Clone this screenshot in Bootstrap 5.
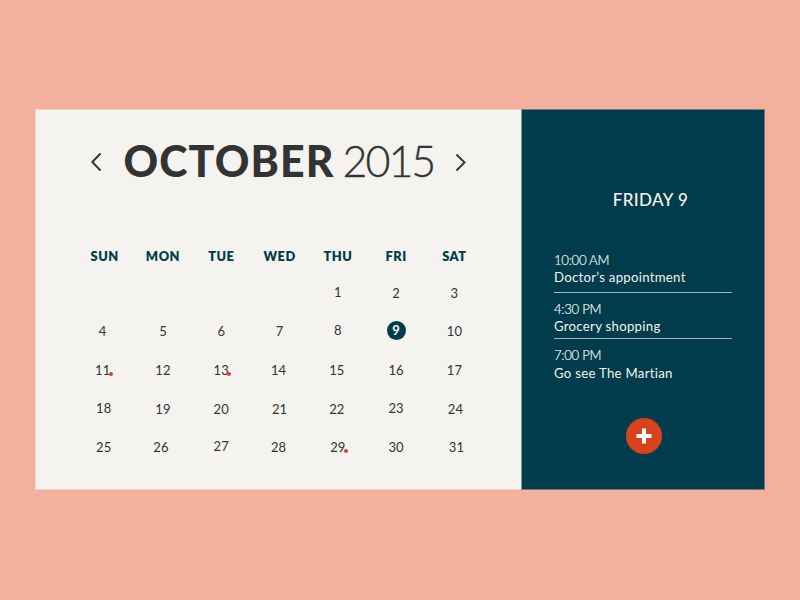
<!DOCTYPE html>
<html lang="en">
<head>
<meta charset="utf-8">
<meta name="viewport" content="width=device-width, initial-scale=1">
<title>October 2015</title>
<link href="https://cdn.jsdelivr.net/npm/bootstrap@5.3.0/dist/css/bootstrap.min.css" rel="stylesheet">
<style>
  body { background: #f4b09e; font-family: Lato, "Open Sans", sans-serif; color: #333; height: 600px; overflow: hidden; }
  .planner { width: 730px; height: 381px; margin: 109px 0 0 35px; }
  .month { width: 486px; background: #f4f3ef; padding-left: 39.5px; border: 1px solid #f4d0c4; border-right: 0; }
  .agenda { background: #003c4b; color: #f4f3ef; padding: 0 32px; border: 1px solid #7a7675; border-left-color: #7a989d; }
  .title-bar { height: 104px; padding-left: 14px; }
  .step { width: 14px; height: 22px; }
  .month-name { font-size: 42.8px; font-weight: 900; line-height: 1; letter-spacing: 1.1px; margin: -2px 0 0 20px; width: 219px; white-space: nowrap; }
  .year-name { font-size: 43px; font-weight: 300; line-height: 1; letter-spacing: -2px; margin-top: -4px; width: 110px; white-space: nowrap; -webkit-text-stroke: .35px #333; }
  .days { display: grid; grid-template-columns: repeat(7, 58.3px); grid-template-rows: 37px; grid-auto-rows: 38.6px; margin-top: 22.5px; }
  .days > * { display: flex; align-items: center; justify-content: center; font-size: 13px; line-height: 16px; letter-spacing: .1px; }
  .days > .weekday { font-size: 12.8px; font-weight: 800; color: #003c4b; letter-spacing: .5px; padding-top: 1px; }
  .up { padding-bottom: 2px; }
  .l1 { padding-right: 2px; } .l2 { padding-right: 4px; } .r1 { padding-left: 2px; } .r2 { padding-left: 4px; }
  .today { width: 19px; height: 19px; background: #003c4b; color: #fff; font-weight: 700; }
  .busy { position: relative; }
  .busy::after { content: ""; position: absolute; right: -2.5px; bottom: 2px; width: 4px; height: 4px; border-radius: 50%; background: #dc431d; }
  .agenda-day { font-size: 17px; line-height: 20px; font-weight: 500; margin: 79.5px 0 0 15px; letter-spacing: .4px; }
  .events { width: 178px; margin-top: 41px; font-size: 13.2px; line-height: 17.3px; }
  .event { height: 46.3px; padding-top: 8px; }
  .event:first-child { height: 41.5px; padding-top: 1px; }
  .event + .event { border-top: 1px solid #a3b5b9; }
  .hour { font-weight: 300; letter-spacing: -.3px; -webkit-text-stroke: .2px #f4f3ef; }
  .what { letter-spacing: .28px; }
  .add { width: 36px; height: 36px; background: #d7431c; margin: 33.5px auto 0 71.5px; }
</style>
</head>
<body>
<main class="planner d-flex">
  <section class="month">
    <header class="title-bar d-flex align-items-center">
      <svg class="step" viewBox="0 0 14 22" fill="none" stroke="#333" stroke-width="1.9"><path d="M10.5 2.5 2.3 11l8.2 8.5"/></svg>
      <span class="month-name">OCTOBER</span>
      <span class="year-name">2015</span>
      <svg class="step" viewBox="0 0 14 22" fill="none" stroke="#333" stroke-width="1.9"><path d="m3.5 3.5 8 8-8 8"/></svg>
    </header>
    <div class="days">
      <div class="weekday">SUN</div><div class="weekday">MON</div><div class="weekday">TUE</div><div class="weekday">WED</div><div class="weekday">THU</div><div class="weekday">FRI</div><div class="weekday">SAT</div>
      <div></div><div></div><div></div><div></div><div class="up">1</div><div>2</div><div>3</div>
      <div class="l2">4</div><div>5</div><div>6</div><div>7</div><div class="up">8</div><div class="up"><span class="today rounded-circle d-flex align-items-center justify-content-center">9</span></div><div>10</div>
      <div class="l2"><span class="busy">11</span></div><div>12</div><div><span class="busy">13</span></div><div class="l1">14</div><div class="l1">15</div><div>16</div><div>17</div>
      <div class="l1 up">18</div><div>19</div><div>20</div><div>21</div><div class="l1">22</div><div class="up">23</div><div class="r1">24</div>
      <div class="l1">25</div><div class="l2">26</div><div class="up">27</div><div class="l1">28</div><div><span class="busy">29</span></div><div>30</div><div class="r2">31</div>
    </div>
  </section>
  <aside class="agenda flex-grow-1">
    <h1 class="agenda-day text-center">FRIDAY 9</h1>
    <div class="events">
      <div class="event"><div class="hour">10:00 AM</div><div class="what">Doctor’s appointment</div></div>
      <div class="event"><div class="hour">4:30 PM</div><div class="what">Grocery shopping</div></div>
      <div class="event"><div class="hour">7:00 PM</div><div class="what">Go see The Martian</div></div>
    </div>
    <div class="add rounded-circle d-flex align-items-center justify-content-center">
      <svg width="16" height="16" viewBox="0 0 16 16" stroke="#fff" stroke-width="4"><path d="M8 .5v15M.5 8h15"/></svg>
    </div>
  </aside>
</main>
<script src="https://cdn.jsdelivr.net/npm/bootstrap@5.3.0/dist/js/bootstrap.bundle.min.js"></script>
</body>
</html>
